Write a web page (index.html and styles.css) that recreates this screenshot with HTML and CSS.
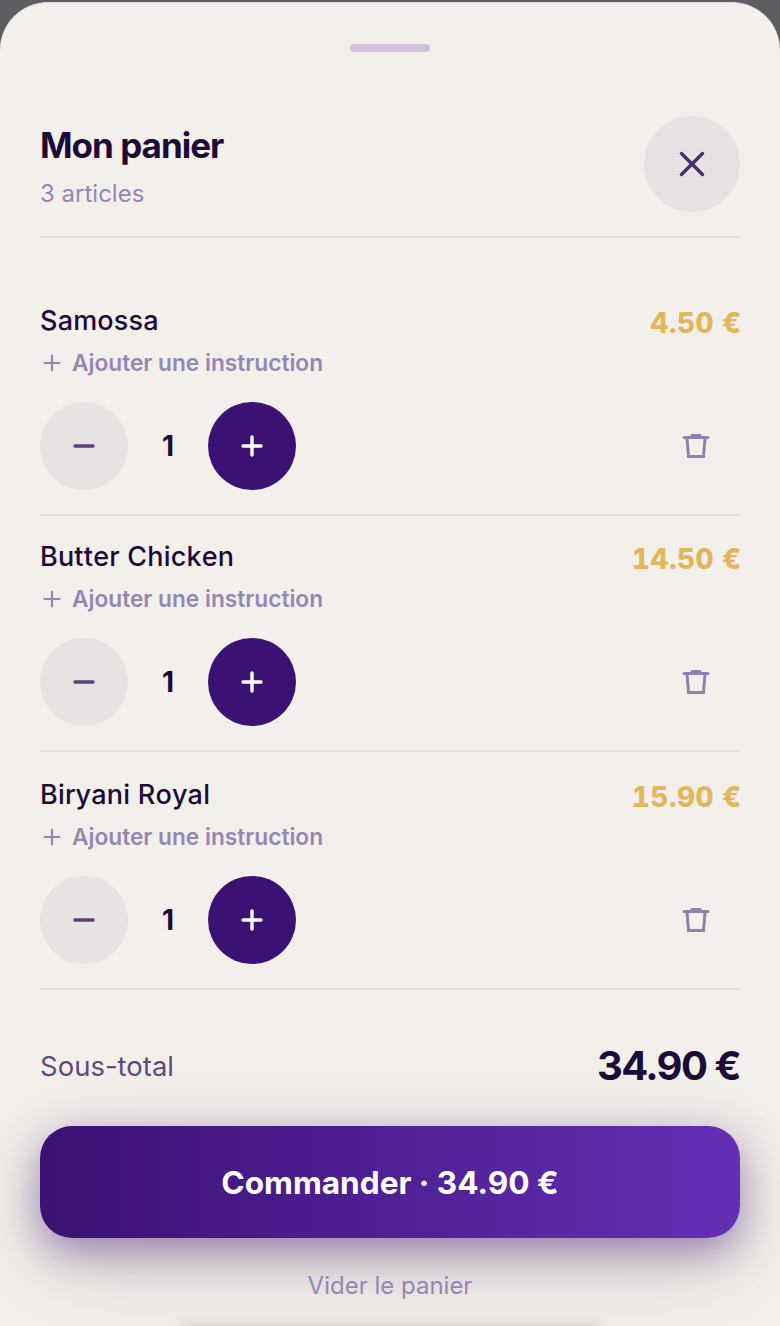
FILE: index.html
```html
<!DOCTYPE html>
<html>
    <head>
        <meta charset="UTF-8">
        <title>Mon panier</title>
        <link rel="stylesheet" href="styles.css">
    </head>
    <body>
        <div class="sheet">
            <div class="handle"></div>
            <div class="header">
                <div>
                    <h1>Mon panier</h1>
                    <p class="count">3 articles</p>
                </div>
                <div class="close">
                    <svg width="32" height="32" viewBox="0 0 32 32"><path d="M5.5 5.5 L26.5 26.5 M26.5 5.5 L5.5 26.5"/></svg>
                </div>
            </div>

            <div class="items">
                <div class="item">
                    <div class="item-top">
                        <div class="name">Samossa</div>
                        <div class="price">4.50 €</div>
                    </div>
                    <div class="note">
                        <svg width="24" height="24" viewBox="0 0 24 24"><path d="M12 4.5 V19.5 M4.5 12 H19.5"/></svg>
                        <span>Ajouter une instruction</span>
                    </div>
                    <div class="controls">
                        <div class="btn minus"><svg width="24" height="24" viewBox="0 0 24 24"><path d="M3 12 H21"/></svg></div>
                        <div class="qty">1</div>
                        <div class="btn plus"><svg width="24" height="24" viewBox="0 0 24 24"><path d="M12 3 V21 M3 12 H21"/></svg></div>
                        <div class="trash">
                            <svg width="28" height="28" viewBox="0 0 28 28"><path class="lid" d="M2 5.5 H26 M10 3.5 H18"/><path d="M5 6 L6.5 24.5 H21.5 L23 6"/></svg>
                        </div>
                    </div>
                </div>
                <div class="item">
                    <div class="item-top">
                        <div class="name">Butter Chicken</div>
                        <div class="price">14.50 €</div>
                    </div>
                    <div class="note">
                        <svg width="24" height="24" viewBox="0 0 24 24"><path d="M12 4.5 V19.5 M4.5 12 H19.5"/></svg>
                        <span>Ajouter une instruction</span>
                    </div>
                    <div class="controls">
                        <div class="btn minus"><svg width="24" height="24" viewBox="0 0 24 24"><path d="M3 12 H21"/></svg></div>
                        <div class="qty">1</div>
                        <div class="btn plus"><svg width="24" height="24" viewBox="0 0 24 24"><path d="M12 3 V21 M3 12 H21"/></svg></div>
                        <div class="trash">
                            <svg width="28" height="28" viewBox="0 0 28 28"><path class="lid" d="M2 5.5 H26 M10 3.5 H18"/><path d="M5 6 L6.5 24.5 H21.5 L23 6"/></svg>
                        </div>
                    </div>
                </div>
                <div class="item">
                    <div class="item-top">
                        <div class="name">Biryani Royal</div>
                        <div class="price">15.90 €</div>
                    </div>
                    <div class="note">
                        <svg width="24" height="24" viewBox="0 0 24 24"><path d="M12 4.5 V19.5 M4.5 12 H19.5"/></svg>
                        <span>Ajouter une instruction</span>
                    </div>
                    <div class="controls">
                        <div class="btn minus"><svg width="24" height="24" viewBox="0 0 24 24"><path d="M3 12 H21"/></svg></div>
                        <div class="qty">1</div>
                        <div class="btn plus"><svg width="24" height="24" viewBox="0 0 24 24"><path d="M12 3 V21 M3 12 H21"/></svg></div>
                        <div class="trash">
                            <svg width="28" height="28" viewBox="0 0 28 28"><path class="lid" d="M2 5.5 H26 M10 3.5 H18"/><path d="M5 6 L6.5 24.5 H21.5 L23 6"/></svg>
                        </div>
                    </div>
                </div>
            </div>

            <div class="subtotal">
                <span class="label">Sous-total</span>
                <span class="total">34.90 €</span>
            </div>

            <div class="order">Commander · 34.90 €</div>
            <div class="clear">Vider le panier</div>
            <div class="home-bar"></div>
        </div>
    </body>
</html>
```

FILE: styles.css
```css
html, body {
    margin: 0;
    padding: 0;
    height: 100%;
    background: #5f5c62;
}
body {
    overflow: hidden;
    font-family: Inter, "Liberation Sans", sans-serif;
    color: #1c0b38;
}
h1, p {
    margin: 0;
    padding: 0;
}
svg {
    display: block;
    fill: none;
    stroke-linecap: round;
}
.sheet {
    position: relative;
    overflow: hidden;
    box-sizing: border-box;
    height: 1324px;
    margin-top: 2px;
    padding: 41px 40px 0 40px;
    background: #f3f0eb;
    border-top: 1px solid #dcd8da;
    border-radius: 48px 48px 0 0;
}
.handle {
    width: 80px;
    height: 8px;
    margin: 0 auto;
    border-radius: 4px;
    background: #cfc1d6;
}
.header {
    display: flex;
    justify-content: space-between;
    align-items: flex-start;
    margin-top: 64px;
    padding-bottom: 24px;
    border-bottom: 2px solid #e6e2e1;
}
h1 {
    margin-top: 9px;
    font-size: 35px;
    line-height: 40px;
    font-weight: 700;
    letter-spacing: -1px;
    color: #1c0b38;
}
.count {
    margin-top: 14px;
    font-size: 24px;
    line-height: 30px;
    color: #9587b5;
}
.close {
    display: flex;
    align-items: center;
    justify-content: center;
    width: 96px;
    height: 96px;
    border-radius: 50%;
    background: #e6e2e3;
}
.close svg {
    stroke: #4a2c6b;
    stroke-width: 3.4;
}
.items {
    padding-top: 65px;
}
.item {
    padding-bottom: 24px;
    margin-bottom: 23px;
    border-bottom: 2px solid #e6e2e1;
}
.item:last-child {
    margin-top: 25px;
    margin-bottom: 0;
}
.item-top {
    display: flex;
    justify-content: space-between;
    align-items: flex-start;
}
.name {
    font-size: 27px;
    line-height: 36px;
    font-weight: 500;
    font-kerning: none;
    letter-spacing: 0.2px;
    color: #1c0b38;
}
.price {
    padding-top: 2px;
    margin-right: -2px;
    font-size: 28px;
    line-height: 36px;
    font-weight: 800;
    letter-spacing: 0.5px;
    font-variant-numeric: tabular-nums;
    color: #e3b65c;
}
.note {
    display: flex;
    align-items: center;
    gap: 8px;
    margin-top: 7px;
    font-size: 22.7px;
    line-height: 30px;
    font-weight: 600;
    color: #9587b5;
}
.note svg {
    stroke: #9587b5;
    stroke-width: 2.2;
}
.controls {
    display: flex;
    align-items: center;
    margin-top: 24px;
}
.btn {
    display: flex;
    align-items: center;
    justify-content: center;
    width: 88px;
    height: 88px;
    border-radius: 50%;
}
.minus {
    background: #e7e3e3;
}
.minus svg {
    stroke: #5a3e7e;
    stroke-width: 3.4;
}
.plus {
    background: #3b1174;
}
.plus svg {
    stroke: #fff;
    stroke-width: 3.4;
}
.qty {
    width: 80px;
    text-align: center;
    font-size: 28px;
    font-weight: 700;
    color: #1c0b38;
}
.trash {
    display: flex;
    justify-content: center;
    width: 88px;
    margin-left: auto;
}
.trash svg {
    stroke: #8f82b0;
    stroke-width: 3;
}
.subtotal {
    display: flex;
    justify-content: space-between;
    align-items: center;
    margin-top: 52px;
}
.label {
    font-size: 27.5px;
    color: #5f4a7e;
}
.total {
    font-size: 40px;
    line-height: 48px;
    font-weight: 700;
    letter-spacing: -1.6px;
    color: #1c0b38;
}
.order {
    height: 112px;
    margin-top: 36px;
    border-radius: 32px;
    text-align: center;
    font-size: 31.6px;
    line-height: 114px;
    font-weight: 700;
    color: #fff;
    background: linear-gradient(90deg, #3b1174, #652fb5);
    box-shadow: 0 14px 40px rgba(59, 17, 116, 0.42), 0 24px 90px rgba(60, 40, 80, 0.18);
}
.clear {
    margin-top: 33px;
    text-align: center;
    font-size: 24px;
    line-height: 30px;
    color: #9587b5;
}
.home-bar {
    position: absolute;
    left: 180px;
    right: 180px;
    bottom: -6px;
    height: 10px;
    background: #d9d5d4;
    filter: blur(4px);
}
```
